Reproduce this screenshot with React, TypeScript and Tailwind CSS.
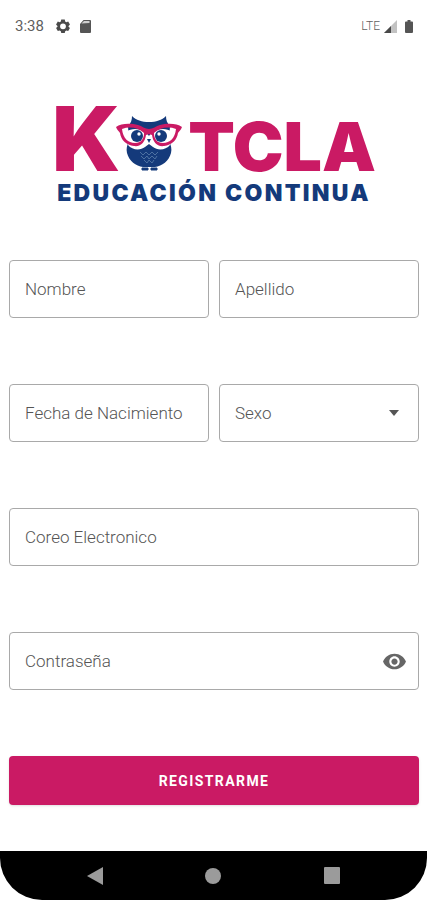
import { useState } from 'react';
import type { ReactNode } from 'react';

const StatusBar = () => (
  <header className="flex h-13 items-center justify-between pl-[15px] pr-[14px] text-[#5f5f5f]">
    <div className="flex items-center">
      <span className="text-[15px] leading-5">3:38</span>
      <svg width="14" height="14" viewBox="0 0 24 24" className="ml-3" fill="#4a4a4a" aria-hidden="true">
        <path
          fillRule="evenodd"
          d="M9 1h6l.7 3.200 2 1.200L20.900 4.400l3 5.200L21.500 11.800v1.400l2.400 2.200-3 5.200-3.200-1-2 1.200L15 24H9l-.7-3.200-2-1.200-3.200 1-3-5.200 2.400-2.200v-1.400L.100 9.600l3-5.200 3.200 1 2-1.200L9 1zm3 6.500a5 5 0 1 0 0 10 5 5 0 0 0 0-10z"
        />
      </svg>
      <svg width="11" height="13" viewBox="0 0 11 13" className="ml-[10px]" aria-hidden="true">
        <path d="M3.500 0H10a1 1 0 0 1 1 1v11a1 1 0 0 1-1 1H1a1 1 0 0 1-1-1V4L3.500 0z" fill="#555" />
        <path d="M1.500 3.500 4 1h5.500v2z" fill="#cfcfcf" />
      </svg>
    </div>
    <div className="flex items-center">
      <span className="text-xs font-light leading-5">LTE</span>
      <svg width="13" height="13" viewBox="0 0 13 13" className="ml-1" aria-hidden="true">
        <path d="M13 0v13H0z" fill="#c2c2c2" />
        <path d="M7 6v7H0z" fill="#484848" />
      </svg>
      <svg width="8" height="13" viewBox="0 0 8 13" className="ml-2" fill="#555" aria-hidden="true">
        <path d="M2.500 0h3v1.500H7a1 1 0 0 1 1 1V12a1 1 0 0 1-1 1H1a1 1 0 0 1-1-1V2.500a1 1 0 0 1 1-1h1.500z" />
      </svg>
    </div>
  </header>
);

const Owl = () => (
  <svg width="66" height="56" viewBox="0 0 66 56" className="-ml-1" aria-hidden="true">
    {/* body */}
    <path
      d="M16 1c4 4 10 6 17 6s13-2 17-6c0 4 1 7 4 10l-1 15c2 4 3 8 2 12-2 8-9 13-16 14H27c-7-1-14-6-16-14-1-4 0-8 2-12l-1-15c3-3 4-6 4-10z"
      fill="#143a7b"
    />
    <path d="M10 17c8-6 19-2 23 4 4-6 15-10 23-4l-2 13c-4 5-12 6-17 2l-4-3-4 3c-5 4-13 3-17-2z" fill="#fff" />
    {/* belly feathers */}
    <path
      d="m24 37 3 3 3-3 3 3 3-3 3 3 3-3M25 41l3 3 3-3 2 3 3-3 3 3 2-3M28 45l3 3 2-3 3 3 2-3"
      fill="none"
      stroke="#5276a6"
      strokeWidth="0.900"
    />
    <path d="M26 53h6v2h-6zM35 53h6v2h-6z" fill="#143a7b" stroke="#143a7b" strokeLinejoin="round" />
    {/* eyes */}
    <circle cx="21" cy="21" r="6" fill="#143a7b" />
    <circle cx="45" cy="21" r="6" fill="#143a7b" />
    <circle cx="23" cy="19" r="1.700" fill="#fff" />
    <circle cx="43" cy="19" r="1.700" fill="#fff" />
    <path d="M31 24h4l-2 4z" fill="#143a7b" />
    {/* glasses */}
    <path
      fillRule="evenodd"
      fill="#ca1a64"
      d="M0 12c5-4 15-4 22-2 4 1 7 4 11 4s7-3 11-4c7-2 17-2 22 2-1 3-3 4-4 6-1 7-6 12-14 13-7 1-11-4-12-11-2-1-4-1-6 0-1 7-5 12-12 11-8-1-13-6-14-13-1-2-3-3-4-6zm6 2c1 9 6 14 13 14 6 0 9-4 9-10-5-5-14-7-22-4zm54 0c-1 9-6 14-13 14-6 0-9-4-9-10 5-5 14-7 22-4z"
    />
  </svg>
);

const Logo = () => (
  <h1 className="mx-auto flex w-fit flex-col items-center font-['Inter',sans-serif] font-black">
    <span className="flex items-baseline text-[#ca1a64]">
      <span className="text-[90px] leading-[70px]">K</span>
      <Owl />
      <span className="ml-1.5 text-[68px] leading-[50px]">TCLA</span>
    </span>
    <span className="mt-2 text-[23px] leading-[22px] tracking-widest text-[#143a7b]">EDUCACIÓN CONTINUA</span>
  </h1>
);

const control =
  'peer col-start-1 row-start-1 h-[58px] w-full appearance-none rounded border border-[#a9a9a9] bg-white px-4 text-[17px] text-[#333] outline-none focus:border-[#ca1a64]';

type FieldProps = {
  id: string;
  label: string;
  type?: string;
  children?: ReactNode;
};

const FieldLabel = ({ id, label }: { id: string; label: string }) => (
  <label
    htmlFor={id}
    className="pointer-events-none col-start-1 row-start-1 ml-4 justify-self-start text-[17px] font-light leading-6 text-[#555] peer-[:not(:placeholder-shown):not(select)]:hidden peer-[select:valid]:hidden"
  >
    {label}
  </label>
);

const Field = ({ id, label, type = 'text', children }: FieldProps) => (
  <div className="grid items-center">
    <input id={id} type={type} placeholder=" " className={control} />
    <FieldLabel id={id} label={label} />
    {children}
  </div>
);

const App = () => {
  const [showPassword, setShowPassword] = useState(false);

  return (
    <div className="flex min-h-screen flex-col bg-white font-['Roboto',sans-serif]">
      <StatusBar />

      <main className="flex flex-1 flex-col pb-10 pl-[9px] pr-2 pt-[52px]">
        <Logo />

        <form className="mt-14 flex flex-col gap-[66px]" onSubmit={(e) => e.preventDefault()}>
          <div className="grid grid-cols-2 gap-[10px]">
            <Field id="nombre" label="Nombre" />
            <Field id="apellido" label="Apellido" />
          </div>

          <div className="grid grid-cols-2 gap-[10px]">
            <Field id="nacimiento" label="Fecha de Nacimiento" />
            <div className="grid items-center">
              <select id="sexo" required defaultValue="" className={control}>
                <option value="" />
                <option value="f">Femenino</option>
                <option value="m">Masculino</option>
              </select>
              <FieldLabel id="sexo" label="Sexo" />
              <svg
                width="10"
                height="6"
                viewBox="0 0 10 6"
                className="pointer-events-none col-start-1 row-start-1 mr-5 justify-self-end"
                aria-hidden="true"
              >
                <path d="M0 0h10L5 6z" fill="#555" />
              </svg>
            </div>
          </div>

          <Field id="correo" label="Coreo Electronico" type="email" />

          <Field id="clave" label="Contraseña" type={showPassword ? 'text' : 'password'}>
            <button
              type="button"
              aria-label="Mostrar contraseña"
              onClick={() => setShowPassword(!showPassword)}
              className="col-start-1 row-start-1 mr-3 justify-self-end"
            >
              <svg width="25" height="25" viewBox="0 0 24 24" fill="#666" aria-hidden="true">
                <path d="M12 4.500C7 4.500 2.730 7.610 1 12c1.730 4.390 6 7.500 11 7.500s9.270-3.110 11-7.500c-1.730-4.390-6-7.500-11-7.500zM12 17c-2.760 0-5-2.240-5-5s2.240-5 5-5 5 2.240 5 5-2.240 5-5 5zm0-8c-1.660 0-3 1.340-3 3s1.340 3 3 3 3-1.340 3-3-1.340-3-3-3z" />
              </svg>
            </button>
          </Field>

          <button
            type="submit"
            className="h-[49px] rounded bg-[#ca1a64] text-sm font-bold tracking-widest text-white shadow"
          >
            REGISTRARME
          </button>
        </form>
      </main>

      {/* Android navigation */}
      <nav className="grid h-[49px] grid-cols-3 items-center justify-items-center rounded-b-[42px] bg-black px-9">
        <button type="button" aria-label="Atrás">
          <svg width="16" height="18" viewBox="0 0 16 18" fill="#9b9b9b">
            <path d="M16 0v18L0 9z" />
          </svg>
        </button>
        <button type="button" aria-label="Inicio">
          <svg width="16" height="16" viewBox="0 0 16 16" fill="#9b9b9b">
            <circle cx="8" cy="8" r="8" />
          </svg>
        </button>
        <button type="button" aria-label="Recientes">
          <svg width="16" height="17" viewBox="0 0 16 17" fill="#9b9b9b">
            <rect width="16" height="17" rx="1" />
          </svg>
        </button>
      </nav>
    </div>
  );
};

export default App;
